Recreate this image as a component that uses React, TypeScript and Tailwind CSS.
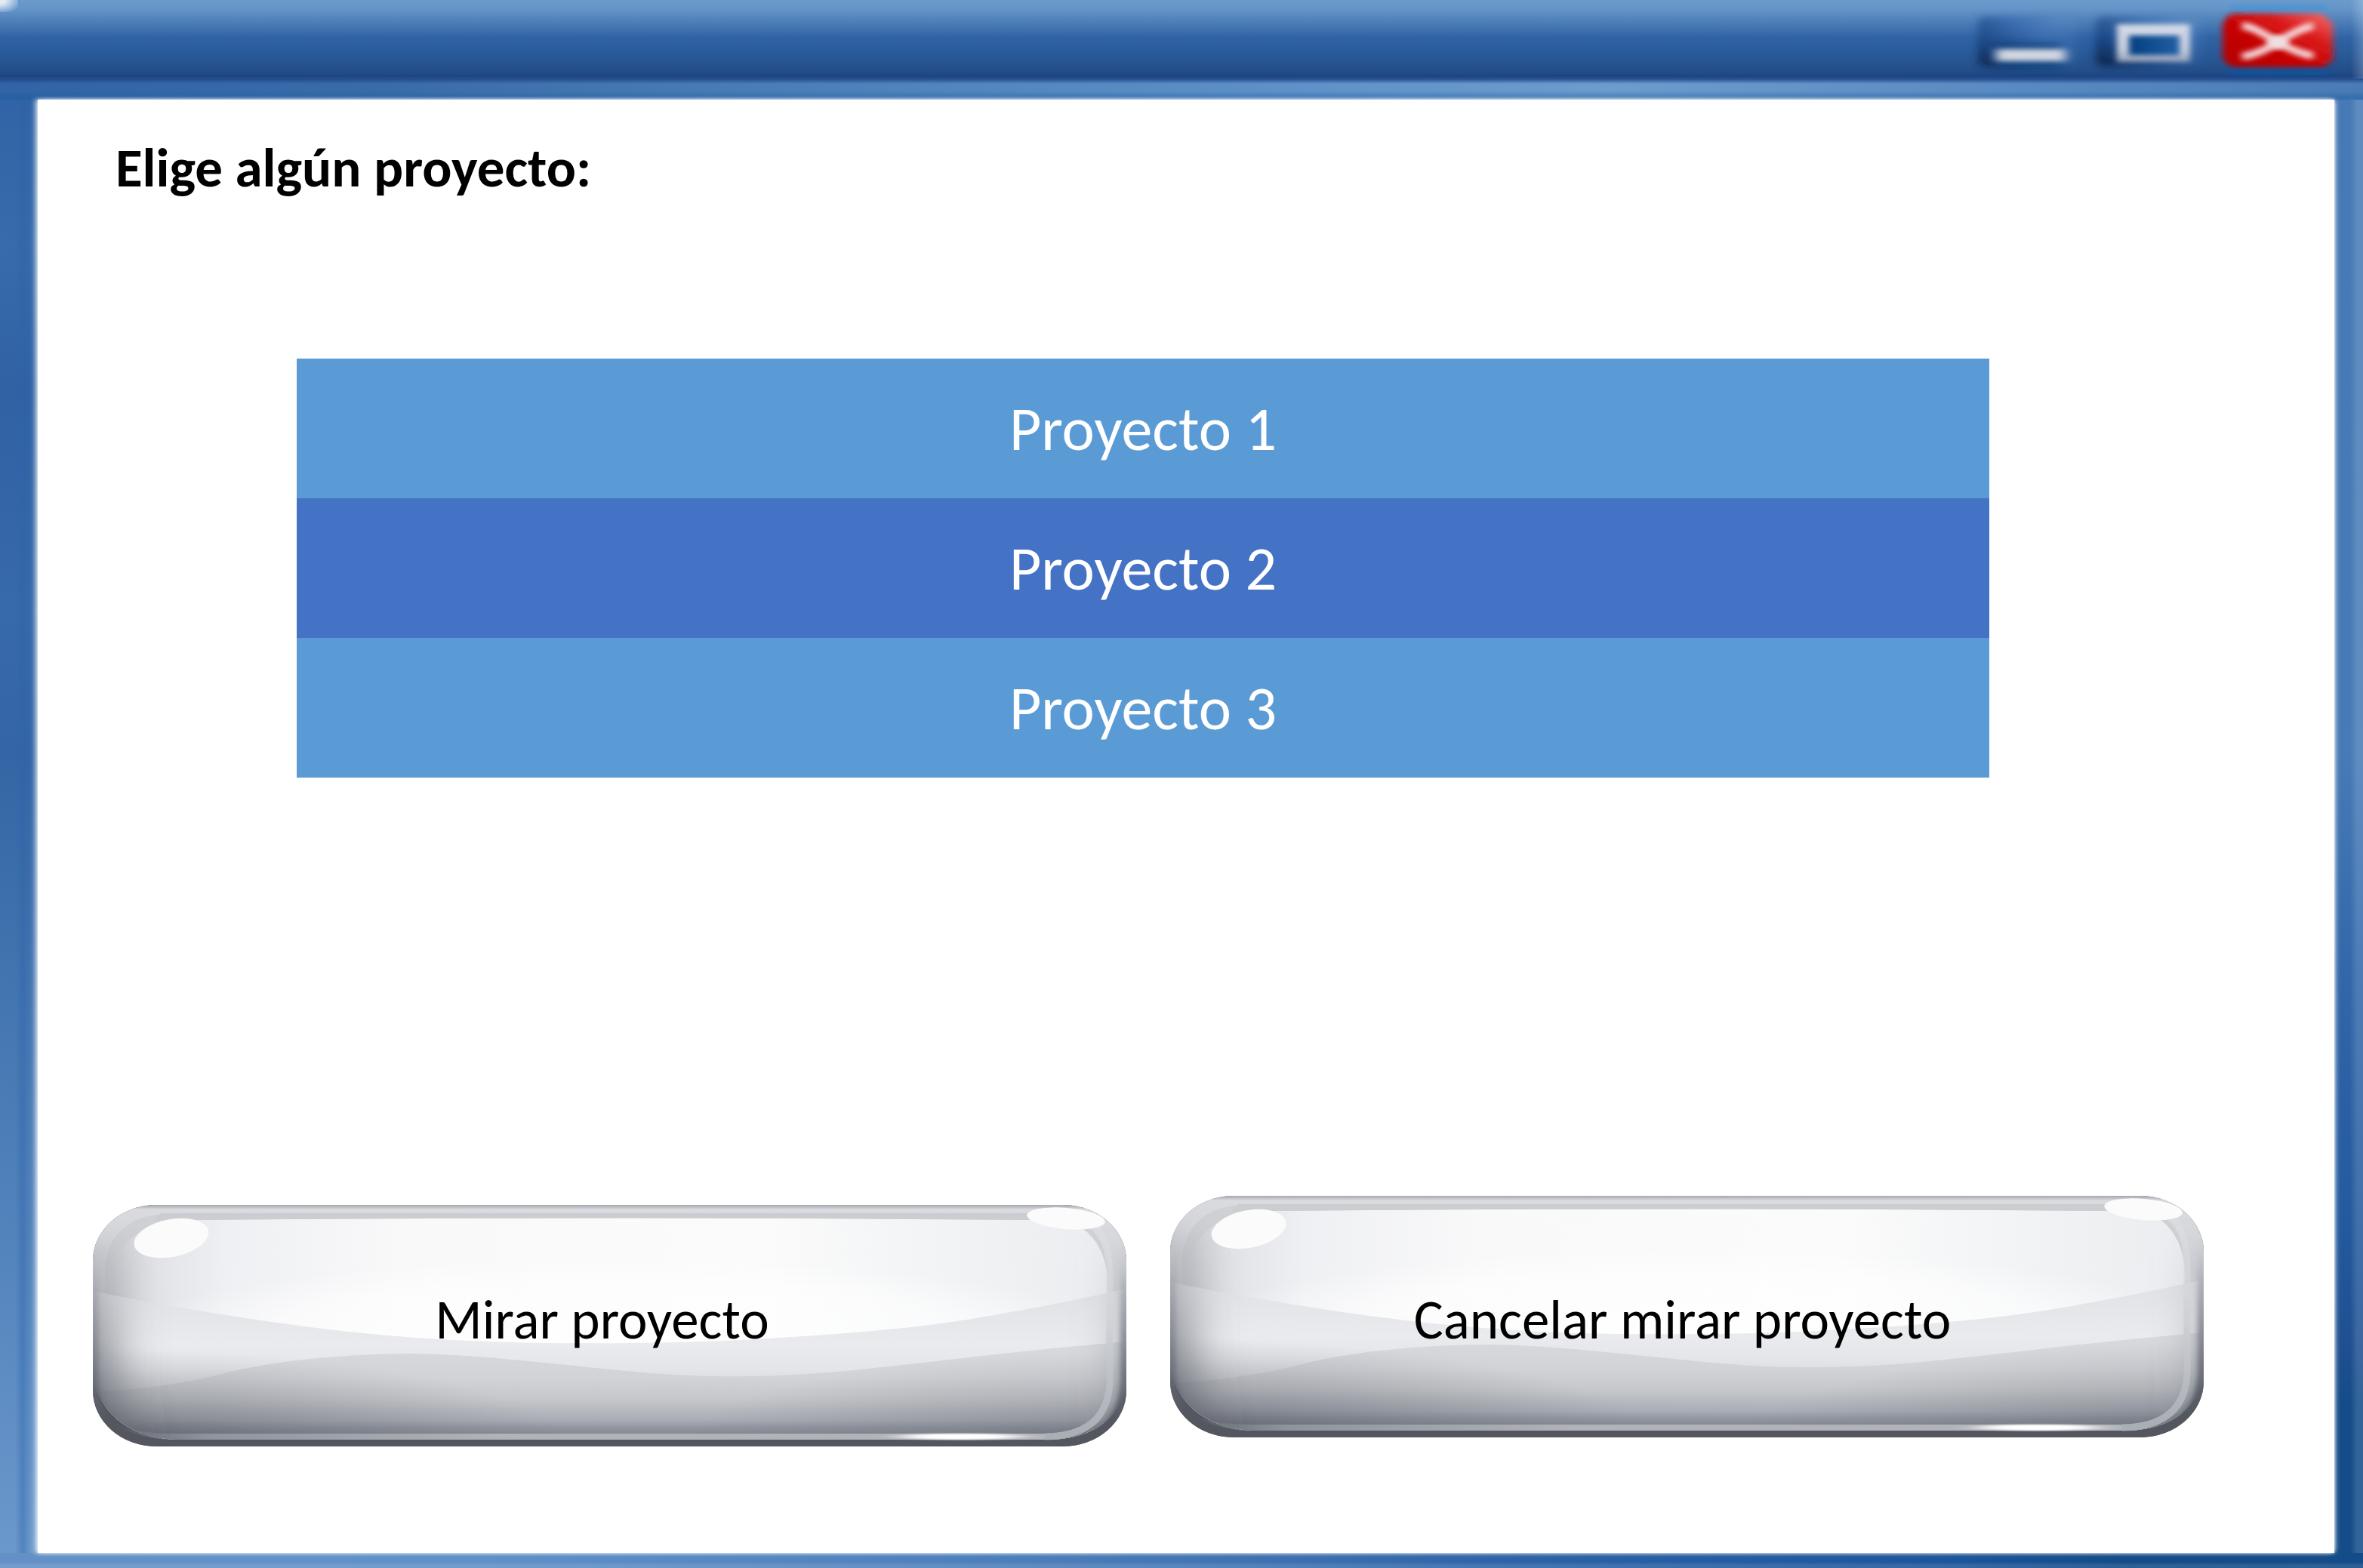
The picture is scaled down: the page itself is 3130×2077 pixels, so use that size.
import { useId, useState, type ReactNode } from "react";

const projects = ["Proyecto 1", "Proyecto 2", "Proyecto 3"];

function MinimizeIcon() {
  return (
    <svg viewBox="0 0 160 104" className="h-full w-full" aria-hidden="true">
      <defs>
        <linearGradient id="min-face" x1="0" y1="1" x2="1" y2="0">
          <stop offset="0" stopColor="#0c2142" />
          <stop offset="0.25" stopColor="#1b4480" />
          <stop offset="0.6" stopColor="#3a6cae" />
          <stop offset="1" stopColor="#6594c9" />
        </linearGradient>
        <linearGradient id="min-fade" x1="0" x2="1">
          <stop offset="0.6" stopColor="#fff" />
          <stop offset="1" stopColor="#fff" stopOpacity="0" />
        </linearGradient>
        <mask id="min-mask" maskUnits="userSpaceOnUse" x="0" y="0" width="160" height="104">
          <rect width="160" height="104" fill="url(#min-fade)" />
        </mask>
        <filter id="min-soft" x="-20%" y="-40%" width="140%" height="180%">
          <feGaussianBlur stdDeviation="6 5" />
        </filter>
        <filter id="min-bar" x="-20%" y="-80%" width="140%" height="260%">
          <feGaussianBlur stdDeviation="7 3" />
        </filter>
      </defs>
      <g mask="url(#min-mask)">
        <rect x="16" y="22" width="134" height="66" rx="10" fill="url(#min-face)" filter="url(#min-soft)" />
      </g>
      <rect x="40" y="58" width="84" height="32" rx="4" fill="#0a3f7c" opacity="0.75" filter="url(#min-soft)" />
      <rect x="40" y="65" width="92" height="16" fill="#d0d5e1" filter="url(#min-bar)" />
    </svg>
  );
}

function MaximizeIcon() {
  return (
    <svg viewBox="0 0 166 104" className="h-full w-full" aria-hidden="true">
      <defs>
        <linearGradient id="max-face" x1="0" y1="1" x2="1" y2="0">
          <stop offset="0" stopColor="#0a1f40" />
          <stop offset="0.3" stopColor="#1a4684" />
          <stop offset="0.7" stopColor="#4577b6" />
          <stop offset="1" stopColor="#6796cb" />
        </linearGradient>
        <linearGradient id="max-fade" x1="0" x2="1">
          <stop offset="0.7" stopColor="#fff" />
          <stop offset="1" stopColor="#fff" stopOpacity="0" />
        </linearGradient>
        <mask id="max-mask" maskUnits="userSpaceOnUse" x="0" y="0" width="166" height="104">
          <rect width="166" height="104" fill="url(#max-fade)" />
        </mask>
        <linearGradient id="max-line" x1="0" y1="0" x2="0" y2="1">
          <stop offset="0" stopColor="#d3dae8" />
          <stop offset="0.7" stopColor="#c8cfde" />
          <stop offset="1" stopColor="#8f9bb2" />
        </linearGradient>
        <linearGradient id="max-hole" x1="0" x2="1">
          <stop offset="0" stopColor="#023f80" />
          <stop offset="1" stopColor="#2460a6" />
        </linearGradient>
        <filter id="max-soft" x="-20%" y="-40%" width="140%" height="180%">
          <feGaussianBlur stdDeviation="6 5" />
        </filter>
        <filter id="max-edge" x="-20%" y="-40%" width="140%" height="180%">
          <feGaussianBlur stdDeviation="4 3" />
        </filter>
      </defs>
      <g mask="url(#max-mask)">
        <rect x="12" y="22" width="146" height="66" rx="10" fill="url(#max-face)" filter="url(#max-soft)" />
      </g>
      <rect x="54" y="44" width="74" height="32" fill="url(#max-hole)" />
      <path d="M40 32H137V82H40ZM56 47V73H123V47Z" fillRule="evenodd" fill="url(#max-line)" filter="url(#max-edge)" />
    </svg>
  );
}

function CloseIcon() {
  return (
    <svg viewBox="0 0 174 104" className="h-full w-full" aria-hidden="true">
      <defs>
        <linearGradient id="close-face" x1="0" y1="1" x2="1" y2="0">
          <stop offset="0" stopColor="#b40000" />
          <stop offset="0.45" stopColor="#c80303" />
          <stop offset="0.7" stopColor="#db1c1c" />
          <stop offset="1" stopColor="#f57272" />
        </linearGradient>
        <filter id="close-soft" x="-20%" y="-20%" width="140%" height="140%">
          <feGaussianBlur stdDeviation="5 3" />
        </filter>
      </defs>
      <rect x="24" y="6" width="128" height="10" fill="#4e94d2" filter="url(#close-soft)" />
      <rect x="24" y="88" width="128" height="11" fill="#07549c" filter="url(#close-soft)" />
      <path
        d="M26 18H144Q150 20 154 26L160 32V80Q156 82 148 89H28Q18 84 14 78V34Q18 22 26 18Z"
        fill="url(#close-face)"
        filter="url(#close-soft)"
      />
      <path
        d="M40 34C56 36 68 45 87 56C106 67 122 72 134 74M134 34C120 37 104 45 87 56C70 67 54 73 40 75"
        fill="none"
        stroke="#f6d4d7"
        strokeWidth="10"
        filter="url(#close-soft)"
      />
      <ellipse cx="87" cy="56" rx="13" ry="9" fill="#f0dfe2" filter="url(#close-soft)" />
    </svg>
  );
}

function GlassSurface() {
  const id = useId().replace(/[^a-zA-Z0-9]/g, "");
  const url = (name: string) => `url(#${id}-${name})`;
  return (
    <svg
      viewBox="0 0 1370 320"
      preserveAspectRatio="none"
      className="absolute inset-0 h-full w-full"
      aria-hidden="true"
    >
      <defs>
        <clipPath id={`${id}-shape`}>
          <rect width="1370" height="320" rx="84" ry="74" />
        </clipPath>
        <clipPath id={`${id}-face`}>
          <path d="M0 0H1370V240Q1352 311 1262 311H110Q20 306 0 230Z" />
        </clipPath>
        <linearGradient id={`${id}-cap`} gradientUnits="userSpaceOnUse" x1="0" y1="0" x2="0" y2="120">
          <stop offset="0" stopColor="#a6a9b1" />
          <stop offset="0.02" stopColor="#b9bbc1" />
          <stop offset="0.05" stopColor="#d9dbdf" />
          <stop offset="0.5" stopColor="#d6d8dc" />
          <stop offset="1" stopColor="#d3d5d9" />
        </linearGradient>
        <linearGradient id={`${id}-top`} gradientUnits="userSpaceOnUse" x1="0" y1="0" x2="1370" y2="0">
          <stop offset="0.02" stopColor="#cfd1d5" />
          <stop offset="0.06" stopColor="#e2e3e7" />
          <stop offset="0.13" stopColor="#eff0f3" />
          <stop offset="0.3" stopColor="#f9f9fa" />
          <stop offset="0.65" stopColor="#fbfbfb" />
          <stop offset="0.85" stopColor="#f0f2f4" />
          <stop offset="1" stopColor="#eaecef" />
        </linearGradient>
        <radialGradient
          id={`${id}-gleam`}
          gradientUnits="userSpaceOnUse"
          cx="0"
          cy="0"
          r="1"
          gradientTransform="translate(700 180) scale(680 110)"
        >
          <stop offset="0" stopColor="#fff" stopOpacity="0.8" />
          <stop offset="0.7" stopColor="#fff" stopOpacity="0.6" />
          <stop offset="1" stopColor="#fff" stopOpacity="0" />
        </radialGradient>
        <linearGradient id={`${id}-mid`} gradientUnits="userSpaceOnUse" x1="0" y1="120" x2="0" y2="250">
          <stop offset="0" stopColor="#e0e2e6" />
          <stop offset="0.5" stopColor="#eaebee" />
          <stop offset="0.75" stopColor="#e4e5e9" />
          <stop offset="1" stopColor="#d3d5d9" />
        </linearGradient>
        <linearGradient id={`${id}-low`} gradientUnits="userSpaceOnUse" x1="0" y1="190" x2="0" y2="303">
          <stop offset="0" stopColor="#d7d9dd" />
          <stop offset="0.35" stopColor="#d1d3d7" />
          <stop offset="0.6" stopColor="#c5c7ca" />
          <stop offset="0.84" stopColor="#a9adb5" />
          <stop offset="0.93" stopColor="#9296a0" />
          <stop offset="1" stopColor="#868a93" />
        </linearGradient>
        <radialGradient
          id={`${id}-leftcorner`}
          gradientUnits="userSpaceOnUse"
          cx="0"
          cy="0"
          r="1"
          gradientTransform="translate(0 325) scale(640 135)"
        >
          <stop offset="0" stopColor="#50545d" stopOpacity="0.75" />
          <stop offset="0.4" stopColor="#5a5e68" stopOpacity="0.38" />
          <stop offset="1" stopColor="#6a6e78" stopOpacity="0" />
        </radialGradient>
        <radialGradient
          id={`${id}-rightcorner`}
          gradientUnits="userSpaceOnUse"
          cx="0"
          cy="0"
          r="1"
          gradientTransform="translate(1370 325) scale(600 130)"
        >
          <stop offset="0" stopColor="#565a64" stopOpacity="0.5" />
          <stop offset="0.4" stopColor="#5f636d" stopOpacity="0.28" />
          <stop offset="1" stopColor="#6a6e78" stopOpacity="0" />
        </radialGradient>
        <linearGradient id={`${id}-fade`} gradientUnits="userSpaceOnUse" x1="0" y1="0" x2="0" y2="320">
          <stop offset="0.1" stopColor="#fff" stopOpacity="0.15" />
          <stop offset="0.36" stopColor="#fff" stopOpacity="0.4" />
          <stop offset="0.6" stopColor="#fff" stopOpacity="0.75" />
          <stop offset="1" stopColor="#fff" stopOpacity="1" />
        </linearGradient>
        <mask id={`${id}-shade`} maskUnits="userSpaceOnUse" x="0" y="0" width="1370" height="320">
          <rect width="1370" height="320" fill={url("fade")} />
        </mask>
        <linearGradient id={`${id}-edge`} gradientUnits="userSpaceOnUse" x1="0" y1="60" x2="0" y2="290">
          <stop offset="0" stopColor="#c3c5ca" stopOpacity="0" />
          <stop offset="0.24" stopColor="#a3a6ae" stopOpacity="0.8" />
          <stop offset="0.55" stopColor="#868a93" />
          <stop offset="0.85" stopColor="#5f636c" />
          <stop offset="1" stopColor="#54575f" />
        </linearGradient>
        <linearGradient id={`${id}-band`} gradientUnits="userSpaceOnUse" x1="0" y1="40" x2="0" y2="300">
          <stop offset="0" stopColor="#dfe1e4" stopOpacity="0.4" />
          <stop offset="0.5" stopColor="#cdd0d4" />
          <stop offset="1" stopColor="#aaaeb5" />
        </linearGradient>
        <linearGradient id={`${id}-sill`} gradientUnits="userSpaceOnUse" x1="30" y1="0" x2="1300" y2="0">
          <stop offset="0" stopColor="#8a8e97" stopOpacity="0" />
          <stop offset="0.1" stopColor="#90949d" />
          <stop offset="0.4" stopColor="#b0b3b9" />
          <stop offset="1" stopColor="#b0b3b9" />
        </linearGradient>
        <filter id={`${id}-blur`} filterUnits="userSpaceOnUse" x="-200" y="-120" width="1770" height="560">
          <feGaussianBlur stdDeviation="34 22" />
        </filter>
        <filter id={`${id}-rim`} filterUnits="userSpaceOnUse" x="-60" y="-60" width="1490" height="440">
          <feGaussianBlur stdDeviation="3" />
        </filter>
        <filter id={`${id}-soft`} filterUnits="userSpaceOnUse" x="900" y="280" width="470" height="50">
          <feGaussianBlur stdDeviation="18 1" />
        </filter>
      </defs>
      <g clipPath={url("shape")}>
        <rect width="1370" height="320" fill="#54575f" />
        <g clipPath={url("face")}>
          <rect width="1370" height="320" fill={url("cap")} />
          <path d="M16 320V80Q24 11 110 11H1262Q1336 14 1346 80V320Z" fill="#cfd1d5" />
          <path d="M26 320V80Q50 21 125 20Q685 15 1240 20L1300 24Q1340 44 1345 96V320Z" fill={url("top")} />
          <rect x="20" y="60" width="1325" height="260" fill={url("gleam")} />
          <path
            d="M0 114Q60 127 122 137Q208 152 296 163Q375 173 457 178Q560 184 650 183Q780 184 893 177Q985 172 1076 163Q1150 155 1228 140Q1300 127 1370 111V320H0Z"
            fill={url("mid")}
          />
          <path
            d="M0 248Q45 246 80 241Q135 234 182 221Q240 208 298 203Q360 197 423 197Q480 198 535 203Q600 209 677 217Q725 222 769 225Q820 228 870 227Q935 226 998 220Q1065 213 1136 205Q1235 193 1370 181V320H0Z"
            fill={url("low")}
          />
          <rect y="180" width="700" height="140" fill={url("leftcorner")} />
          <rect x="700" y="180" width="670" height="140" fill={url("rightcorner")} />
          <g mask={url("shade")}>
            <path
              d="M-14 40V250L0 330"
              fill="none"
              stroke="#565a64"
              strokeWidth="76"
              filter={url("blur")}
            />
            <path d="M1396 330V60" fill="none" stroke="#6a6e78" strokeWidth="46" filter={url("blur")} />
          </g>
        </g>
        <path
          d="M1368 60V236Q1362 318 1270 322H100Q6 318 1 236V60"
          fill="none"
          stroke={url("edge")}
          strokeWidth="12"
          filter={url("rim")}
        />
        <path
          d="M1330 30Q1348 52 1348 96V236Q1344 306 1262 307"
          fill="none"
          stroke={url("band")}
          strokeWidth="9"
        />
        <path d="M30 290Q56 303 110 303H1262V311H110Q60 311 30 290Z" fill={url("sill")} />
        <path d="M90 11H1240L1240 20Q685 15 125 20L80 22Z" fill="#cbcdd1" />
        <ellipse cx="1150" cy="307" rx="80" ry="4" fill="#fff" filter={url("soft")} />
        <ellipse cx="104" cy="44" rx="50" ry="25" transform="rotate(-11 104 44)" fill="#fbfbfc" />
        <ellipse cx="1290" cy="18" rx="52" ry="14" transform="rotate(5 1290 18)" fill="#fbfbfc" />
      </g>
    </svg>
  );
}

function GlassButton({ children, className }: { children: ReactNode; className: string }) {
  return (
    <button
      type="button"
      className={`relative h-80 cursor-pointer text-[73px] leading-[88px] text-black ${className}`}
    >
      <GlassSurface />
      <span className="relative">{children}</span>
    </button>
  );
}

export default function App() {
  const [selected, setSelected] = useState(1);
  return (
    <div className="flex min-h-screen flex-col font-[Carlito,Calibri,Lato,sans-serif]">
      <header className="relative flex h-[104px] justify-end bg-[linear-gradient(to_bottom,#6b9bcc_0%,#6696c9_10%,#4e80b8_27%,#3063a5_48%,#2c5f9f_58%,#265490_80%,#224c87_92%,#1c4482_97%,#26508f_100%)] pr-[26px]">
        <div className="absolute top-0 left-0 h-4 w-6 bg-[radial-gradient(ellipse_at_top_left,#e4ebf5_20%,transparent_85%)]" />
        <div className="absolute top-0 right-0 h-full w-4 bg-linear-to-r from-transparent to-white/20" />
        <button type="button" aria-label="Minimizar" className="h-full w-40 cursor-pointer">
          <MinimizeIcon />
        </button>
        <button type="button" aria-label="Maximizar" className="h-full w-[166px] cursor-pointer">
          <MaximizeIcon />
        </button>
        <button type="button" aria-label="Cerrar" className="h-full w-[174px] cursor-pointer">
          <CloseIcon />
        </button>
      </header>

      <div className="h-7 bg-[linear-gradient(to_bottom,#20498a_0%,transparent_25%,transparent_60%,#1a5ba066_85%),linear-gradient(to_right,#3164a5_0%,#3a6ba9_16%,#5083bc_38%,#5f91c8_55%,#6c9bcd_68%,#5f8fc5_80%,#4a7bb6_100%)]" />

      <div className="grid flex-1 grid-cols-[50px_1fr_38px]">
        <div className="bg-[linear-gradient(to_right,transparent_40%,#2a63a866_60%,transparent_80%),linear-gradient(to_bottom,#3064a6_0%,#376ba9_10%,#3062a4_20%,#376aa8_35%,#3466a5_45%,#4274b0_60%,#5585bd_80%,#6593c8_95%,#6a98cb_100%)]" />

        <main className="relative flex flex-col bg-white shadow-[0_0_4px_#ffffffcc,-4px_0_6px_#ffffff99,4px_0_6px_-2px_#ffffff99]">
          <h1 className="pt-[46px] pl-[103px] text-[73px] leading-[88px] font-bold text-black">
            Elige algún proyecto:
          </h1>

          <ul className="mt-[209px] mr-[457px] ml-[343px]">
            {projects.map((name, i) => (
              <li key={name}>
                <button
                  type="button"
                  aria-pressed={selected === i}
                  onClick={() => setSelected(i)}
                  className={`h-[185px] w-full cursor-pointer text-[82px] leading-[100px] text-white ${
                    selected === i ? "bg-[#4472c4]" : "bg-[#5b9bd5]"
                  }`}
                >
                  {name}
                </button>
              </li>
            ))}
          </ul>

          <div className="mt-auto mr-[173px] mb-[141px] ml-[73px] grid grid-cols-2 items-end gap-[58px]">
            <GlassButton className="pr-5 pb-4">Mirar proyecto</GlassButton>
            <GlassButton className="mb-3 pt-2 pr-3">Cancelar mirar proyecto</GlassButton>
          </div>
        </main>

        <div className="bg-[linear-gradient(to_right,transparent_55%,#ffffff22_80%),linear-gradient(to_bottom,#4679b5_0%,#477ab6_45%,#3268aa_60%,#23599d_78%,#1f4f90_86%,#134c88_90%,#134c88_100%)]" />
      </div>

      <div className="h-5 bg-[linear-gradient(to_bottom,transparent_60%,#ffffff1c_80%),linear-gradient(to_right,#6391c7_0%,#5f90c8_20%,#4a7cb9_45%,#2c62a6_65%,#1d569b_82%,#134c88_90%,#134c88_100%)]" />
    </div>
  );
}
